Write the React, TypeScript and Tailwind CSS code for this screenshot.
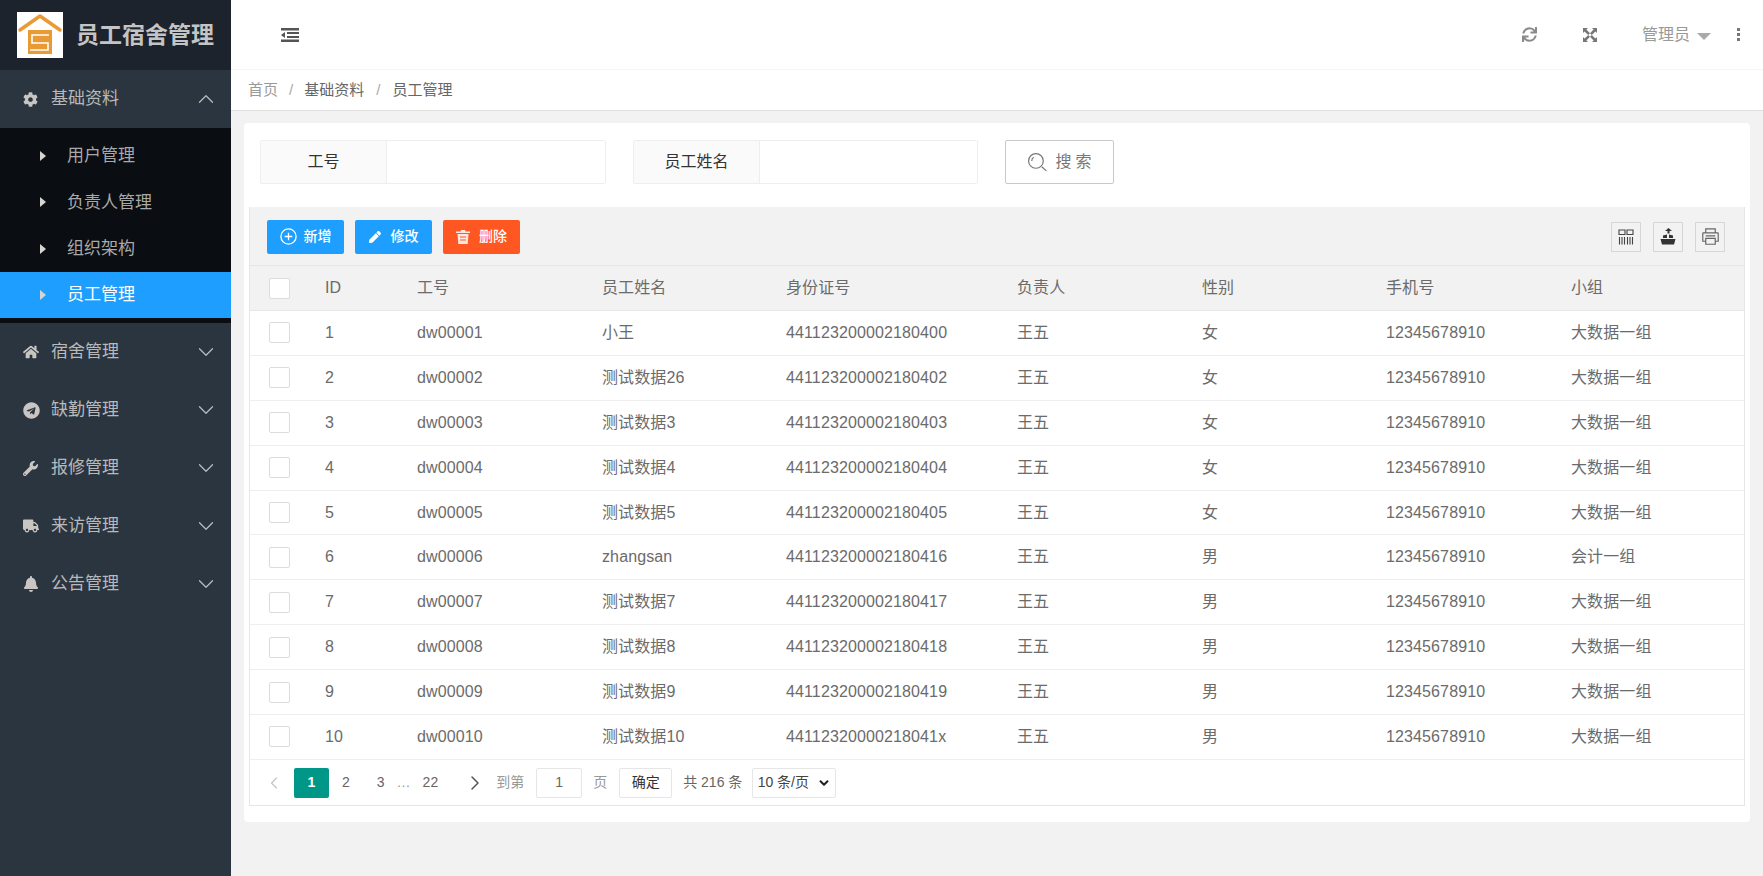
import type { ReactNode } from "react";
import { ChevronDown, ChevronLeft, ChevronRight, ChevronUp } from "lucide-react";
import { FaBell, FaCog, FaHome, FaPen, FaSync, FaTelegram, FaTruck, FaWrench } from "react-icons/fa";

const subMenu = ["用户管理", "负责人管理", "组织架构", "员工管理"];

const menus = [
  { label: "宿舍管理", icon: <FaHome size={16} /> },
  { label: "缺勤管理", icon: <FaTelegram size={17} /> },
  { label: "报修管理", icon: <FaWrench size={15} /> },
  { label: "来访管理", icon: <FaTruck size={16} /> },
  { label: "公告管理", icon: <FaBell size={16} /> },
];

const columns = ["ID", "工号", "员工姓名", "身份证号", "负责人", "性别", "手机号", "小组"];

const rows = [
  ["1", "dw00001", "小王", "441123200002180400", "王五", "女", "12345678910", "大数据一组"],
  ["2", "dw00002", "测试数据26", "441123200002180402", "王五", "女", "12345678910", "大数据一组"],
  ["3", "dw00003", "测试数据3", "441123200002180403", "王五", "女", "12345678910", "大数据一组"],
  ["4", "dw00004", "测试数据4", "441123200002180404", "王五", "女", "12345678910", "大数据一组"],
  ["5", "dw00005", "测试数据5", "441123200002180405", "王五", "女", "12345678910", "大数据一组"],
  ["6", "dw00006", "zhangsan", "441123200002180416", "王五", "男", "12345678910", "会计一组"],
  ["7", "dw00007", "测试数据7", "441123200002180417", "王五", "男", "12345678910", "大数据一组"],
  ["8", "dw00008", "测试数据8", "441123200002180418", "王五", "男", "12345678910", "大数据一组"],
  ["9", "dw00009", "测试数据9", "441123200002180419", "王五", "男", "12345678910", "大数据一组"],
  ["10", "dw00010", "测试数据10", "44112320000218041x", "王五", "男", "12345678910", "大数据一组"],
];

const gridCols = "grid grid-cols-[60px_92px_185px_184px_231px_185px_184px_185px_1fr]";

function Checkbox() {
  return <span className="block h-[21px] w-[21px] rounded-[2px] border border-[#dcdcdc] bg-white" />;
}

function Logo() {
  return (
    <div className="flex h-[46px] w-[46px] items-center justify-center bg-white">
      <svg width="46" height="46" viewBox="0 0 46 46" fill="none">
        <path d="M3 18 23 4l20 14" stroke="#e99a35" strokeWidth="3.5" strokeLinecap="round" strokeLinejoin="round" />
        <rect x="11" y="18" width="24" height="24" fill="#e99a35" />
        <path d="M32 23H15v8h16v7H13" stroke="#fff" strokeWidth="1.6" />
      </svg>
    </div>
  );
}

function MenuItem({ label, icon, open }: { label: string; icon: ReactNode; open?: boolean }) {
  return (
    <div className="flex h-[58px] items-center pl-[23px] pr-[12px] text-[17px] text-[#b9b9b9]">
      <span className="flex w-[28px] items-center text-[#c9c5c2]">{icon}</span>
      <span className="flex-1">{label}</span>
      {open ? <ChevronUp size={26} strokeWidth={1.2} /> : <ChevronDown size={26} strokeWidth={1.2} />}
    </div>
  );
}

function Sidebar() {
  return (
    <aside className="flex w-[231px] shrink-0 flex-col bg-[#2a3540]">
      <div className="flex h-[70px] items-center gap-[13px] bg-[#1d232c] pl-[17px]">
        <Logo />
        <span className="text-[23px] font-bold text-[#c4c4c4]">员工宿舍管理</span>
      </div>
      <MenuItem label="基础资料" icon={<FaCog size={15} />} open />
      <div className="bg-[#0a0d12] py-[5px]">
        {subMenu.map((name, i) => (
          <div
            key={name}
            className={
              i === 3
                ? "flex h-[46.25px] items-center gap-[21px] bg-[#1e9fff] pl-[40px] text-[17px] text-white"
                : "flex h-[46.25px] items-center gap-[21px] pl-[40px] text-[17px] text-[#a9a9a9]"
            }
          >
            <span className="h-0 w-0 border-y-[5px] border-l-[6px] border-y-transparent border-l-[#d8d4cf]" />
            {name}
          </div>
        ))}
      </div>
      {menus.map((m) => (
        <MenuItem key={m.label} label={m.label} icon={m.icon} />
      ))}
    </aside>
  );
}

function Header() {
  return (
    <header className="flex h-[70px] shrink-0 items-center border-b border-[#f6f6f6] bg-white pl-[50px] pr-[23px]">
      <svg width="18" height="14" viewBox="0 0 18 14" fill="#555">
        <path d="M0 0h18v2.500H0zM6 4h12v2H6zM6 8h12v2H6zM0 11.500h18V14H0zM4 4v6L0 7z" />
      </svg>
      <div className="ml-auto flex items-center text-[#8a8a8a]">
        <FaSync size={15} />
        <svg className="ml-[45px]" width="16" height="16" viewBox="0 0 16 16" fill="#777">
          <path d="M1 1h5L4.400 2.600 8 6.200 6.200 8 2.600 4.400 1 6zM15 1v5l-1.600-1.600L9.800 8 8 6.200l3.600-3.600L10 1zM1 15v-5l1.600 1.600L6.200 8 8 9.800l-3.600 3.600L6 15zM15 15h-5l1.600-1.600L8 9.800 9.800 8l3.600 3.600L15 10z" />
        </svg>
        <span className="ml-[44px] text-[16px] text-[#999]">管理员</span>
        <span className="ml-[7px] mt-[3px] h-0 w-0 border-x-[7px] border-t-[7px] border-x-transparent border-t-[#aaa]" />
        <span className="ml-[26px] flex flex-col gap-[2px]">
          <span className="h-[3px] w-[3px] bg-[#777]" />
          <span className="h-[3px] w-[3px] bg-[#777]" />
          <span className="h-[3px] w-[3px] bg-[#777]" />
        </span>
      </div>
    </header>
  );
}

function Breadcrumb() {
  return (
    <div className="flex h-[41px] shrink-0 items-center border-b border-[#dfdfdf] bg-white pl-[17px] pt-[1px] text-[15px] text-[#666]">
      <span className="text-[#999]">首页</span>
      <span className="mx-[11px] text-[#aaa]">/</span>
      <span>基础资料</span>
      <span className="mx-[12px] text-[#aaa]">/</span>
      <span>员工管理</span>
    </div>
  );
}

function SearchField({ label, width }: { label: string; width: string }) {
  return (
    <div className={"flex h-[44px] rounded-[2px] border border-[#eeeeee] " + width}>
      <div className="flex w-[126px] items-center justify-center border-r border-[#eeeeee] bg-[#fafafa] text-[16px] text-[#333]">
        {label}
      </div>
      <input className="min-w-0 flex-1 bg-white outline-none" />
    </div>
  );
}

function ToolButton({ children }: { children: ReactNode }) {
  return (
    <div className="flex h-[30px] w-[30px] items-center justify-center border border-[#d6d6d6] text-[#333]">
      {children}
    </div>
  );
}

function Toolbar() {
  return (
    <div className="flex h-[59px] items-center border-b border-[#e6e6e6] bg-[#f2f2f2] pl-[17px] pr-[19px] pt-[1px]">
      <button className="flex h-[34px] w-[77px] items-center justify-center gap-[7px] rounded-[2px] bg-[#1e9fff] text-[14px] font-medium text-white">
        <svg width="17" height="17" viewBox="0 0 17 17" fill="none" stroke="#fff" strokeWidth="1.300">
          <circle cx="8.500" cy="8.500" r="7.600" />
          <path d="M8.500 4.700v7.600M4.700 8.500h7.600" />
        </svg>
        新增
      </button>
      <button className="ml-[11px] flex h-[34px] w-[77px] items-center justify-center gap-[10px] rounded-[2px] bg-[#1e9fff] text-[14px] font-medium text-white">
        <FaPen size={12} />
        修改
      </button>
      <button className="ml-[11px] flex h-[34px] w-[77px] items-center justify-center gap-[9px] rounded-[2px] bg-[#ff5722] text-[14px] font-medium text-white">
        <svg width="14" height="14" viewBox="0 0 14 14" fill="#fff" fillOpacity="0.85">
          <path d="M5 0h4l.5 1.500H14V3H0V1.500h4.500zM1.500 4h11l-.8 10H2.300zM4 6.500v1h6v-1zM4 9.500v1h6v-1z" fillRule="evenodd" />
        </svg>
        删除
      </button>
      <div className="ml-auto flex gap-[12px]">
        <ToolButton>
          <svg width="16" height="16" viewBox="0 0 16 16" fill="none" stroke="#444" strokeWidth="1.100">
            <path d="M1 1h6v4.500H1zM9 1h6v4.500H9zM1.500 8v7.500M4 8v7.500M6.500 8v7.500M9.500 8v7.500M12 8v7.500M14.500 8v7.500" />
          </svg>
        </ToolButton>
        <ToolButton>
          <svg width="16" height="17" viewBox="0 0 16 17" fill="#333">
            <path d="M0.500 11h15L14 16.500H2zM3 10V7.500l4-1V10zM9 10V6.500l4 1V10zM8.500 0l3.500 3H9.500v2.500h-2V3H5z" />
          </svg>
        </ToolButton>
        <ToolButton>
          <svg width="19" height="19" viewBox="0 0 16 16" fill="none" stroke="#666" strokeWidth="1">
            <path d="M4 5V1.500h8V5M4 12H1.500V5.500a.5.5 0 0 1 .5-.5h12a.5.5 0 0 1 .5.500V12H12" />
            <path d="M4 9.500h8v5H4zM4 7.500h8" />
          </svg>
        </ToolButton>
      </div>
    </div>
  );
}

function Table() {
  return (
    <div className="border-x border-b border-[#e6e6e6]">
      <Toolbar />
      <div className={gridCols + " h-[45px] items-center border-b border-[#e6e6e6] bg-[#f2f2f2] text-[16px] tracking-[0.12px] text-[#6b6b6b]"}>
        <div className="pl-[19px]">
          <Checkbox />
        </div>
        {columns.map((c) => (
          <div key={c} className="pl-[15px]">
            {c}
          </div>
        ))}
      </div>
      {rows.map((row) => (
        <div key={row[0]} className={gridCols + " h-[44.9px] items-center border-b border-[#eeeeee] bg-white text-[16px] tracking-[0.12px] text-[#6b6b6b]"}>
          <div className="pl-[19px]">
            <Checkbox />
          </div>
          {row.map((cell, i) => (
            <div key={i} className="pl-[15px]">
              {cell}
            </div>
          ))}
        </div>
      ))}
      <Pager />
    </div>
  );
}

function Pager() {
  return (
    <div className="flex h-[45px] items-center bg-white pl-[14px] pt-[1px] text-[14px] text-[#666]">
      <ChevronLeft size={20} strokeWidth={1.3} className="text-[#c2c2c2]" />
      <span className="ml-[10px] flex h-[30px] w-[35px] items-center justify-center rounded-[2px] bg-[#009688] font-bold text-white">1</span>
      <span className="ml-[13px]">2</span>
      <span className="ml-[27px]">3</span>
      <span className="ml-[12px] text-[#999]">…</span>
      <span className="ml-[12px]">22</span>
      <ChevronRight size={24} strokeWidth={1.5} className="ml-[25px] text-[#555]" />
      <span className="ml-[9px] text-[#999]">到第</span>
      <span className="ml-[12px] flex h-[30px] w-[46px] items-center justify-center rounded-[2px] border border-[#e6e6e6]">1</span>
      <span className="ml-[11px] text-[#999]">页</span>
      <span className="ml-[12px] flex h-[30px] w-[53px] items-center justify-center rounded-[2px] border border-[#e6e6e6] text-[#333]">确定</span>
      <span className="ml-[11px]">共 216 条</span>
      <span className="ml-[10px] flex h-[30px] w-[84px] items-center justify-center gap-[8px] rounded-[2px] border border-[#e6e6e6] text-[#444]">
        10 条/页
        <ChevronDown size={14} strokeWidth={3.5} className="text-[#222]" />
      </span>
    </div>
  );
}

export default function App() {
  return (
    <div
      className="flex h-[876px] w-full overflow-hidden bg-[#f2f2f2]"
      style={{ fontFamily: '"Liberation Sans", "Noto Sans CJK SC", sans-serif' }}
    >
      <Sidebar />
      <main className="flex min-w-0 flex-1 flex-col">
        <Header />
        <Breadcrumb />
        <div className="px-[13px] pt-[12px]">
          <div className="rounded-[4px] bg-white px-[5px] pb-[16px] pt-[17px]">
            <div className="flex items-center pl-[11px]">
              <SearchField label="工号" width="w-[346px]" />
              <div className="ml-[27px]">
                <SearchField label="员工姓名" width="w-[345px]" />
              </div>
              <button className="ml-[27px] flex h-[44px] w-[109px] items-center justify-center gap-[7px] rounded-[2px] border border-[#c9c9c9] bg-white pl-[4px] text-[16px] tracking-[4px] text-[#777]">
                <svg width="21" height="21" viewBox="0 0 20 20" fill="none" stroke="#777" strokeWidth="1.100">
                  <circle cx="8.500" cy="8.500" r="7" />
                  <path d="M4.500 8.500a4 4 0 0 1 2-3.500M14 14l4.500 4" />
                </svg>
                搜索
              </button>
            </div>
            <div className="mt-[23px]">
              <Table />
            </div>
          </div>
        </div>
      </main>
    </div>
  );
}
